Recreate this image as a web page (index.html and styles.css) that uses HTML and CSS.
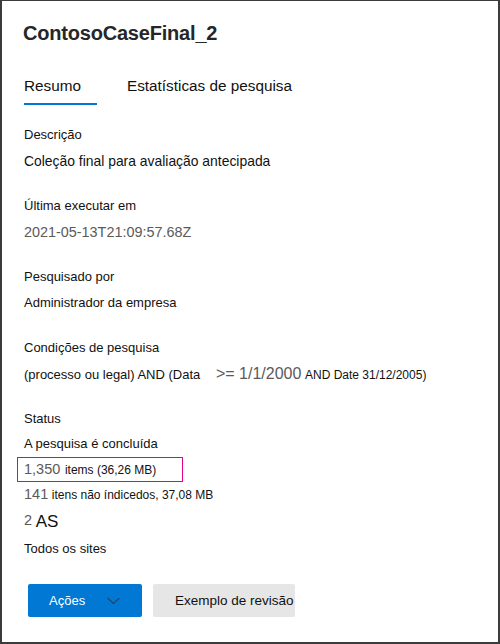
FILE: index.html
```html
<!DOCTYPE html>
<html lang="pt">
<head>
<meta charset="utf-8">
<title>ContosoCaseFinal_2</title>
<link rel="stylesheet" href="styles.css">
</head>
<body>
<div class="frame">
  <h1 class="title">ContosoCaseFinal_2</h1>
  <nav class="tabs">
    <span class="tab active">Resumo</span>
    <span class="tab">Estatísticas de pesquisa</span>
  </nav>
  <section class="field first">
    <div class="line">Descrição</div>
    <div class="line wide">Coleção final para avaliação antecipada</div>
  </section>
  <section class="field">
    <div class="line">Última executar em</div>
    <div class="line muted date">2021-05-13T21:09:57.68Z</div>
  </section>
  <section class="field">
    <div class="line">Pesquisado por</div>
    <div class="line">Administrador da empresa</div>
  </section>
  <section class="field">
    <div class="line">Condições de pesquisa</div>
    <div class="line">(processo ou legal) AND (Data <span class="gap"></span><span class="big muted">&gt;= 1/1/2000</span> <span class="small">AND Date 31/12/2005)</span></div>
  </section>
  <section class="field status">
    <div class="line">Status</div>
    <div class="line s2">A pesquisa é concluída</div>
    <div class="line s3"><span class="highlight"><span class="num muted">1,350</span> <span class="small">items (36,26 MB)</span></span></div>
    <div class="line s4"><span class="num muted">141</span> <span class="small">itens não índicedos, 37,08 MB</span></div>
    <div class="line s5"><span class="num muted sup">2</span> <span class="xl">AS</span></div>
    <div class="line s6">Todos os sites</div>
  </section>
  <div class="actions">
    <button class="btn primary">Ações
      <svg class="chev" width="13" height="8" viewBox="0 0 13 8"><path d="M0.5 0.8 L6.5 6.6 L12.5 0.8" fill="none" stroke="#1f3f60" stroke-width="1.1"/></svg>
    </button>
    <button class="btn secondary">Exemplo de revisão</button>
  </div>
</div>
</body>
</html>
```

FILE: styles.css
```css
* { box-sizing: border-box; }
html, body { margin: 0; padding: 0; background: #fff; }
body {
  font-family: "Liberation Sans", Arial, sans-serif;
  color: #111;
}
.frame {
  width: 500px;
  height: 644px;
  border: 2px solid #3b3b3b;
  border-top-width: 1px;
  padding: 0 0 0 22px;
  overflow: hidden;
}
.title {
  margin: 20px 0 0 -1px;
  font-size: 20px;
  line-height: 24px;
  font-weight: bold;
  color: #262626;
  letter-spacing: -0.2px;
}
.tabs {
  display: flex;
  gap: 30px;
  margin-top: 31px;
}
.tab {
  font-size: 15.3px;
  line-height: 20px;
  color: #111;
  padding-bottom: 7px;
  border-bottom: 2px solid transparent;
}
.tab.active {
  width: 73px;
  border-bottom-color: #0078d4;
}
.field { margin-top: 19px; }
.field.first { margin-top: 17px; }
.line {
  font-size: 13px;
  line-height: 26px;
  height: 26px;
  white-space: nowrap;
}
.line.wide { font-size: 13.9px; }
.muted { color: #5a5a5a; }
.date { font-size: 14.4px; }
.gap { display: inline-block; width: 12px; }
.big { font-size: 16px; }
.small { font-size: 12px; }
.num { font-size: 14.5px; }
.xl { font-size: 17px; color: #111; }
.sup { position: relative; top: -2px; }
.status .s2 { height: 24px; line-height: 24px; }
.status .s3 { height: 25px; line-height: 25px; padding-top: 1px; }
.highlight {
  display: inline-block;
  margin-left: -7px;
  padding: 0 26px 0 6px;
  border: 1px solid #e3008c;
  line-height: 22px;
}
.highlight .num { margin-right: 1px; }
.status .s4 { height: 27px; line-height: 27px; }
.status .s5 { height: 28px; line-height: 28px; }
.actions {
  display: flex;
  gap: 11px;
  margin: 22px 0 0 4px;
}
.btn {
  height: 33px;
  border: none;
  border-radius: 2px;
  font-family: "Liberation Sans", Arial, sans-serif;
  font-size: 13.5px;
  display: flex;
  align-items: center;
  white-space: nowrap;
  overflow: hidden;
  padding: 0;
}
.btn.primary {
  width: 114px;
  background: #0078d4;
  color: #fff;
  padding-left: 21px;
  font-size: 13px;
}
.chev { margin-left: 22px; }
.btn.secondary {
  width: 142px;
  background: #e6e6e6;
  color: #111;
  padding-left: 22px;
}
```
